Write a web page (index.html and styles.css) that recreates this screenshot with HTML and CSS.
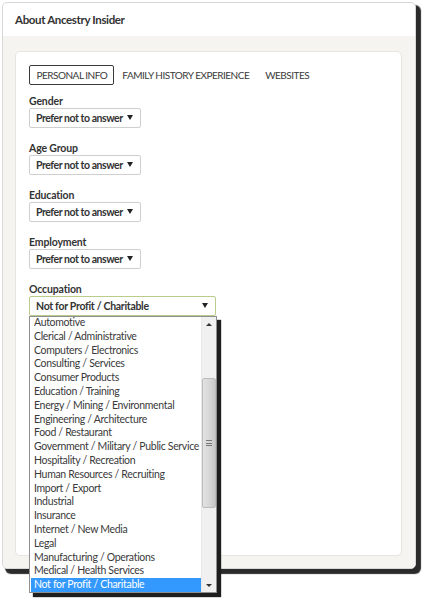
FILE: index.html
```html
<!DOCTYPE html>
<html>
<head>
<meta charset="utf-8">
<link rel="stylesheet" href="styles.css">
</head>
<body>
<div class="window">
  <div class="header">About Ancestry Insider</div>
  <div class="body">
    <div class="card">
      <div class="tabs">
        <span class="tab active">PERSONAL INFO</span>
        <span class="tab">FAMILY HISTORY EXPERIENCE</span>
        <span class="tab">WEBSITES</span>
      </div>
      <div class="field">
        <div class="label">Gender</div>
        <div class="select"><span>Prefer not to answer</span><span class="arrow"></span></div>
      </div>
      <div class="field">
        <div class="label">Age Group</div>
        <div class="select"><span>Prefer not to answer</span><span class="arrow"></span></div>
      </div>
      <div class="field">
        <div class="label">Education</div>
        <div class="select"><span>Prefer not to answer</span><span class="arrow"></span></div>
      </div>
      <div class="field">
        <div class="label">Employment</div>
        <div class="select"><span>Prefer not to answer</span><span class="arrow"></span></div>
      </div>
      <div class="field occ">
        <div class="label">Occupation</div>
        <div class="select wide"><span>Not for Profit / Charitable</span><span class="arrow"></span></div>
        <div class="dropdown">
          <ul class="options">
            <li>Automotive</li>
            <li>Clerical / Administrative</li>
            <li>Computers / Electronics</li>
            <li>Consulting / Services</li>
            <li>Consumer Products</li>
            <li>Education / Training</li>
            <li>Energy / Mining / Environmental</li>
            <li>Engineering / Architecture</li>
            <li>Food / Restaurant</li>
            <li>Government / Military / Public Service</li>
            <li>Hospitality / Recreation</li>
            <li>Human Resources / Recruiting</li>
            <li>Import / Export</li>
            <li>Industrial</li>
            <li>Insurance</li>
            <li>Internet / New Media</li>
            <li>Legal</li>
            <li>Manufacturing / Operations</li>
            <li>Medical / Health Services</li>
            <li class="selected">Not for Profit / Charitable</li>
          </ul>
          <div class="scrollbar">
            <div class="sb-arrow up"></div>
            <div class="sb-track">
              <div class="thumb"><span class="grip"></span></div>
            </div>
            <div class="sb-arrow down"></div>
          </div>
        </div>
      </div>
    </div>
  </div>
</div>
</body>
</html>
```
FILE: styles.css
```css
* { box-sizing: border-box; }
html, body { margin: 0; padding: 0; background: #fff; }
body {
  font-family: "Lato", "Open Sans", sans-serif;
  color: #333;
  width: 423px;
  height: 600px;
  overflow: hidden;
}
.window {
  margin: 2px 0 0 2px;
  width: 414px;
  height: 567px;
  border: 1px solid #d8d8d8;
  border-radius: 5px;
  background: #fff;
  box-shadow: 4px 4px 1px 1px #2b2b2b;
  display: flex;
  flex-direction: column;
}
.header {
  height: 33px;
  flex: none;
  display: flex;
  align-items: center;
  padding-left: 12px;
  font-weight: 700;
  font-size: 11.5px;
  letter-spacing: -0.35px;
  color: #333;
  border-radius: 5px 5px 0 0;
}
.body {
  flex: 1;
  background: #f5f4f0;
  padding: 15px 13px 12px 12px;
  border-radius: 0 0 5px 5px;
}
.card {
  background: #fff;
  border: 1px solid #e6e5e0;
  border-radius: 5px;
  height: 100%;
  padding: 13px 13px;
}
.tabs {
  display: flex;
  align-items: center;
  margin-bottom: 10px;
}
.tab {
  font-size: 10px;
  color: #3a3a3a;
  letter-spacing: -0.5px;
  padding: 0 8px;
  line-height: 13px;
  white-space: nowrap;
}
.tab.active {
  border: 1.5px solid #3a3a3a;
  border-radius: 2px;
  padding: 0 6px 0 6.5px;
  height: 20px;
  display: flex;
  align-items: center;
}
.field { margin-bottom: 14px; }
.label {
  font-size: 10.5px;
  font-weight: 700;
  letter-spacing: -0.15px;
  color: #333;
  line-height: 13px;
}
.select {
  width: 112px;
  height: 20px;
  border: 1px solid #cfcfcf;
  border-radius: 2px;
  display: flex;
  align-items: center;
  justify-content: space-between;
  padding: 0 7px 0 6px;
  font-size: 10.5px;
  font-weight: 700;
  letter-spacing: -0.45px;
  color: #333;
  white-space: nowrap;
}
.arrow {
  flex: none;
  width: 0; height: 0;
  border-left: 3px solid transparent;
  border-right: 3px solid transparent;
  border-top: 5px solid #222;
  margin-top: -1px;
}
.select.wide {
  width: 187px;
  border-color: #b9cc8a;
  letter-spacing: -0.3px;
  padding-right: 7px;
}
.occ { position: relative; }
.dropdown {
  position: absolute;
  left: 0;
  top: 33px;
  width: 188px;
  height: 277px;
  background: #fff;
  border: 1px solid #8f8f8f;
  box-shadow: 4px 4px 1px #1e1e1e;
  display: flex;
  z-index: 5;
}
.options {
  list-style: none;
  margin: 0;
  padding: 0 0 0 1px;
  flex: 1;
  overflow: hidden;
}
.options li {
  font-size: 10.5px;
  letter-spacing: -0.32px;
  line-height: 13.8px;
  height: 13.8px;
  padding-left: 3px;
  color: #3a3a3a;
  white-space: nowrap;
  position: relative;
  top: -1px;
}
.options li.selected {
  background: #3399ff;
  color: #fff;
}
.scrollbar {
  width: 15px;
  flex: none;
  background: #f0f0f0;
  display: flex;
  flex-direction: column;
  border-left: 1px solid #e8e8e8;
}
.sb-arrow {
  height: 14px;
  display: flex;
  align-items: center;
  justify-content: center;
}
.sb-arrow::after {
  content: "";
  width: 0; height: 0;
  border-left: 3px solid transparent;
  border-right: 3px solid transparent;
}
.sb-arrow.up::after { border-bottom: 3px solid #333; }
.sb-arrow.down::after { border-top: 3px solid #333; }
.sb-track {
  flex: 1;
  position: relative;
}
.thumb {
  position: absolute;
  left: 0;
  right: 0;
  top: 47px;
  height: 130px;
  background: linear-gradient(to right, #e2e2e2, #d5d5d5 60%, #c8c8c8);
  border: 1px solid #bdbdbd;
  border-radius: 2px;
  display: flex;
  align-items: center;
  justify-content: center;
}
.grip {
  width: 6px;
  height: 6px;
  border-top: 1px solid #777;
  border-bottom: 1px solid #777;
  position: relative;
}
.grip::after {
  content: "";
  position: absolute;
  left: 0; right: 0;
  top: 1.5px;
  border-top: 1px solid #777;
}
```
